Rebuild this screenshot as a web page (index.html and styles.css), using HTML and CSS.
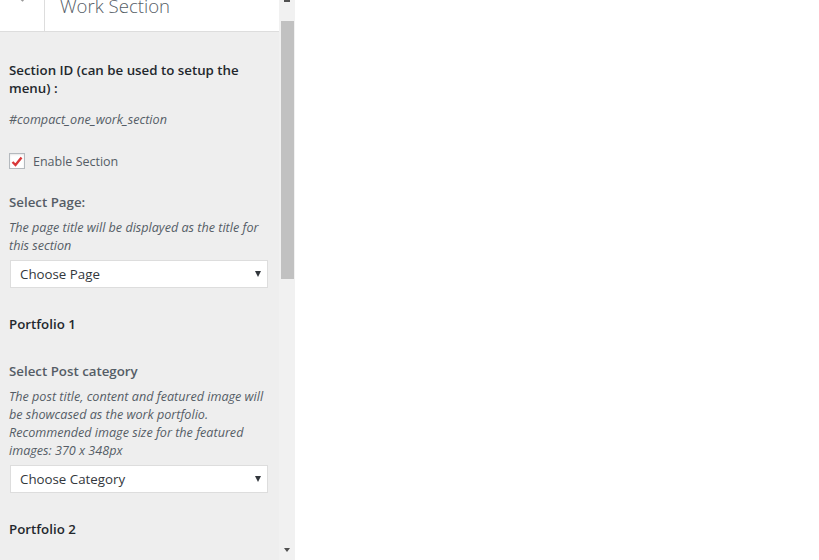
FILE: index.html
```html
<!DOCTYPE html>
<html lang="en">
<head>
    <meta charset="UTF-8">
    <title>Work Section</title>
    <link rel="stylesheet" href="styles.css">
</head>
<body>
    <div class="layout">
        <div class="sidebar">
            <div class="section-head">
                <div class="back"><span class="chevron"></span></div>
                <h3 class="section-title">Work Section</h3>
            </div>

            <div class="controls">
                <div class="control">
                    <span class="title strong">Section ID (can be used to setup the menu) :</span>
                    <p class="desc id-text">#compact_one_work_section</p>
                </div>

                <div class="control">
                    <label class="check">
                        <span class="box">
                            <svg width="12" height="11" viewBox="0 0 12 11"><path d="M1.5 6 L4.5 9 L10.5 1.5" fill="none" stroke="#d9383a" stroke-width="2.4"/></svg>
                        </span>
                        Enable Section
                    </label>
                </div>

                <div class="control after-select">
                    <span class="title">Select Page:</span>
                    <p class="desc">The page title will be displayed as the title for this section</p>
                    <div class="select">Choose Page<span class="arrow"></span></div>
                </div>

                <div class="control heading">
                    <span class="title strong">Portfolio 1</span>
                </div>

                <div class="control after-select">
                    <span class="title">Select Post category</span>
                    <p class="desc">The post title, content and featured image will be showcased as the work portfolio. Recommended image size for the featured images: 370 x 348px</p>
                    <div class="select">Choose Category<span class="arrow"></span></div>
                </div>

                <div class="control heading">
                    <span class="title strong">Portfolio 2</span>
                </div>
            </div>
        </div>

        <div class="scrollbar">
            <div class="arrow-up"></div>
            <div class="thumb"></div>
            <div class="arrow-down"></div>
        </div>

        <div class="preview"></div>
    </div>
</body>
</html>
```

FILE: styles.css
```css
body {
    margin: 0;
    font-family: "Open Sans", "Noto Sans", sans-serif;
    background-color: #fff;
    overflow: hidden;
}
.layout {
    display: flex;
    height: 560px;
}
.sidebar {
    width: 279px;
    background-color: #eee;
    overflow: hidden;
}
.section-head {
    display: flex;
    height: 31px;
    background-color: #fff;
    border-bottom: 1px solid #ddd;
    overflow: hidden;
}
.back {
    width: 44px;
    border-right: 1px solid #ddd;
    position: relative;
}
.chevron {
    position: absolute;
    left: 18px;
    top: -9px;
    width: 7px;
    height: 7px;
    border-left: 2px solid #999;
    border-bottom: 2px solid #999;
    transform: rotate(45deg);
}
.section-title {
    margin: -8px 0 0 15px;
    font-size: 18.6px;
    font-weight: 300;
    line-height: 28px;
    color: #555d66;
}
.controls {
    padding: 29px 9px 0 9px;
}
.control {
    margin-bottom: 24px;
}
.control.after-select {
    margin-bottom: 27px;
}
.control.heading {
    margin-bottom: 29px;
}
.title {
    display: block;
    font-size: 13.3px;
    font-weight: 600;
    line-height: 18px;
    color: #555d66;
}
.title.strong {
    color: #23282d;
}
.desc {
    margin: 8px 0 5px;
    font-size: 12.6px;
    font-style: italic;
    line-height: 18px;
    color: #555d66;
}
.id-text {
    margin-top: 14px;
    margin-bottom: 0;
}
.check {
    display: flex;
    align-items: center;
    gap: 8px;
    height: 16px;
    font-size: 12.5px;
    color: #555d66;
}
.box {
    width: 14px;
    height: 14px;
    border: 1px solid #b4b9be;
    background-color: #fff;
    display: flex;
    align-items: center;
    justify-content: center;
    box-shadow: inset 0 1px 2px rgba(0, 0, 0, 0.1);
}
.select {
    position: relative;
    margin-left: 1px;
    width: 247px;
    height: 26px;
    padding-left: 9px;
    border: 1px solid #ddd;
    background-color: #fff;
    font-size: 13.3px;
    line-height: 26px;
    color: #32373c;
}
.arrow {
    position: absolute;
    right: 6px;
    top: 10px;
    border-left: 3px solid transparent;
    border-right: 3px solid transparent;
    border-top: 6px solid #32373c;
}
.scrollbar {
    width: 16px;
    background-color: #f1f1f1;
    position: relative;
}
.thumb {
    position: absolute;
    left: 2px;
    top: 21px;
    width: 13px;
    height: 258px;
    background-color: #c1c1c1;
}
.arrow-up {
    position: absolute;
    left: 5px;
    top: 0;
    width: 6px;
    height: 2px;
    background-color: #505050;
}
.arrow-down {
    position: absolute;
    left: 5px;
    top: 548px;
    border-left: 3px solid transparent;
    border-right: 3px solid transparent;
    border-top: 4px solid #505050;
}
.preview {
    flex: 1;
    background-color: #fff;
}
```
